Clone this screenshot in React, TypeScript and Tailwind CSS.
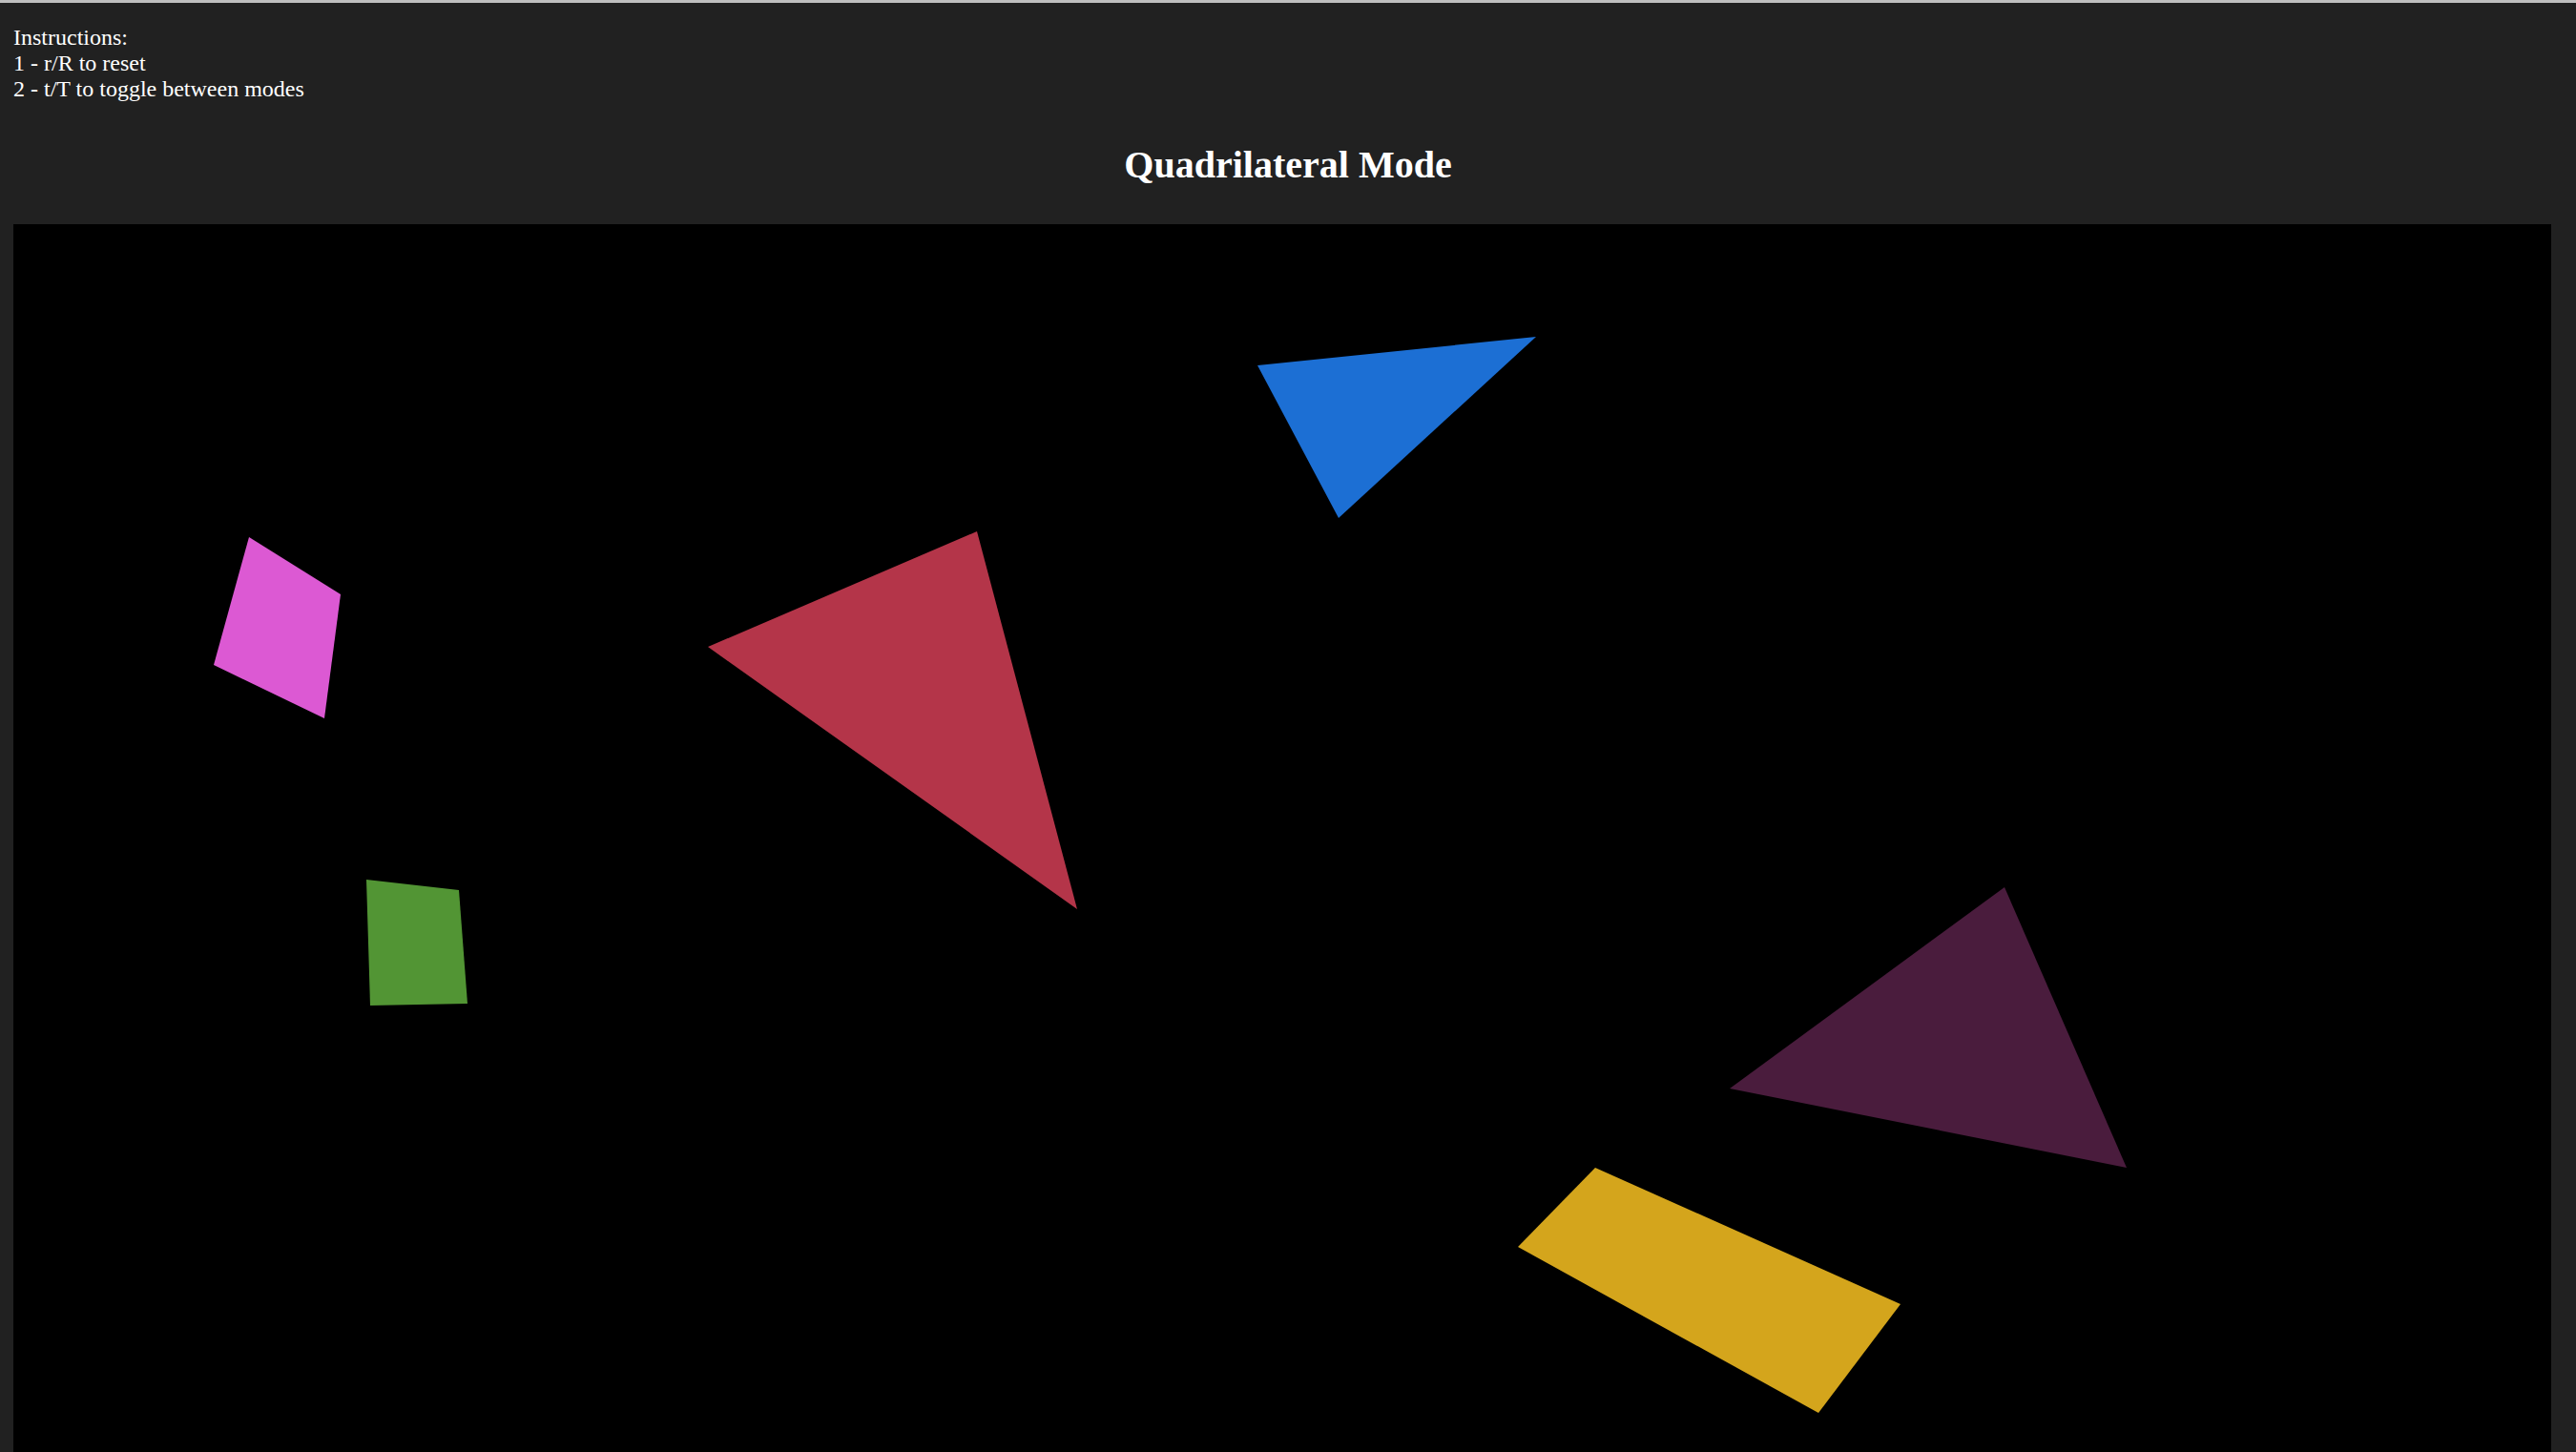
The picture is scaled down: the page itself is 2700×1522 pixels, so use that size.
import React from "react";

const shapes: { pts: string; fill: string }[] = [
  { pts: "247,328 343,388 326,518 210,462", fill: "#dc59d3" },
  { pts: "370,687 467,698 476,817 374,819", fill: "#529534" },
  { pts: "728,443 1010,322 1115,718", fill: "#b43549" },
  { pts: "1304,148 1596,118 1389,308", fill: "#1c6fd4" },
  { pts: "2087,695 2215,989 1799,906", fill: "#4a1c3d" },
  { pts: "1658,989 1978,1132 1892,1246 1577,1072", fill: "#d4a51c" },
];

export default function App() {
  return (
    <div
      className="min-h-screen bg-[#212121] border-t-[3px] border-[#bfbfbf] text-white"
      style={{ fontFamily: '"Liberation Serif", "Times New Roman", serif' }}
    >
      <div className="pt-[23px] pl-[14px] text-[24px] leading-[27px]">
        <div>Instructions:</div>
        <div>1 - r/R to reset</div>
        <div>2 - t/T to toggle between modes</div>
      </div>
      <h2 className="mt-[42px] mb-[38px] text-center text-[40px] leading-[48px] font-bold">
        Quadrilateral Mode
      </h2>
      <div className="ml-[14px] w-[2660px] h-[1300px] bg-black">
        <svg width="2660" height="1300" viewBox="0 0 2660 1300">
          {shapes.map((s, i) => (
            <polygon key={i} points={s.pts} fill={s.fill} />
          ))}
        </svg>
      </div>
    </div>
  );
}
